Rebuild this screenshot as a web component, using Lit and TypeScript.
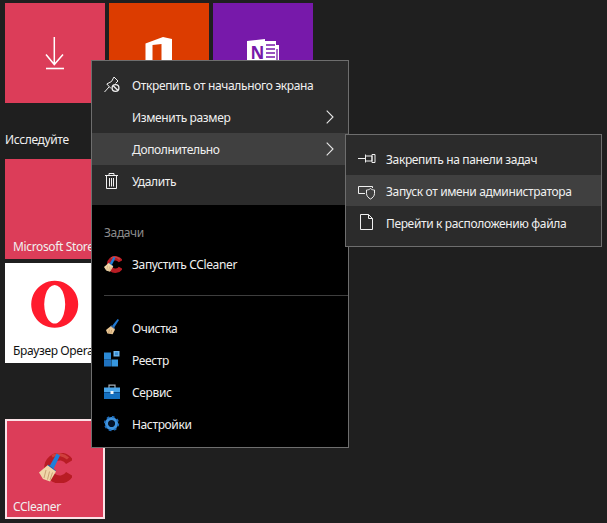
import { LitElement, html, css, svg } from "lit";
import { customElement } from "lit/decorators.js";

const ccleaner = (w: number, h: number) => html`<svg width=${w} height=${h} viewBox="0 0 33 30">
  <path d="M30.5 9 A11.5 11.5 0 1 0 30.5 21" fill="none" stroke="#b81c24" stroke-width="8"/>
  <path d="M29 5.5 A13.5 13.5 0 0 0 13 3.2" fill="none" stroke="#cf3f3c" stroke-width="3"/>
  <path d="M17.6 0.6 L21 2.6 L14.5 16 L10.4 13.4 Z" fill="#1f7fd8"/>
  <path d="M9.5 11.5 L16.8 17.5 L15.6 19.5 L8 13 Z" fill="#2461a8"/>
  <path d="M0 19.5 L8.6 12.3 L17 18.5 L11 28.5 L4 26 Z" fill="#f0d6a8"/>
  <path d="M7 17 L5 25 M10.5 18.5 L8.5 26.5 M13.5 19.5 L11 27" stroke="#c9a274" stroke-width="1" fill="none"/>
</svg>`;

const brush = html`<svg width="18" height="18" viewBox="0 0 18 18">
  <path d="M13.6 0 L15 1 L10.2 8.4 L8 7 Z" fill="#1f78d1"/>
  <path d="M7.2 6.2 L11 9 L10.2 10.4 L6.4 7.6 Z" fill="#3a6ea8"/>
  <path d="M2 11 L6.6 7.2 L11 10.6 L8.6 15.2 L3.4 14.6 Z" fill="#eac795"/>
  <path d="M5.5 10.5 L4.6 14 M7.6 11 L6.8 14.6" stroke="#b98f5c" stroke-width=".7"/>
</svg>`;

const registry = html`<svg width="18" height="18" viewBox="0 0 18 18">
  <rect x="0" y="1.5" width="7" height="7" fill="#2b8ad6"/>
  <rect x="0" y="8.5" width="7" height="7" fill="#1f72bf"/>
  <rect x="7.4" y="8.5" width="6.6" height="7" fill="#3798e0"/>
  <rect x="9.5" y="0" width="6" height="5.5" fill="#6db6ec"/>
  <rect x="11" y="1.3" width="3" height="2.8" fill="#3a8fd6"/>
</svg>`;

const toolbox = html`<svg width="16" height="16" viewBox="0 0 16 16">
  <path d="M5 4 V1.2 H11 V4" stroke="#a3aeb8" stroke-width="1.2" fill="none"/>
  <rect x="0" y="3.5" width="16" height="5" fill="#4aa6ea"/>
  <rect x="0" y="8.5" width="16" height="6.5" fill="#1470c0"/>
  <rect x="0" y="8" width="16" height="1" fill="#0d4f90"/>
  <rect x="6.5" y="7" width="3" height="3" fill="#f2f6fa"/>
</svg>`;

const gear = html`<svg width="16" height="16" viewBox="0 0 18 18">
  <circle cx="8.5" cy="8.5" r="5.6" fill="none" stroke="#3f93de" stroke-width="3.6"/>
  <circle cx="8.5" cy="8.5" r="7.6" fill="none" stroke="#1f6dbb" stroke-width="2" stroke-dasharray="3 3"/>
  <circle cx="8.5" cy="8.5" r="3.5" fill="#03122a"/>
</svg>`;

const stroke = "#f0f0f0";
const unpin = html`<svg width="18" height="18" viewBox="0 0 18 18" fill="none" stroke=${stroke} stroke-width="1">
  <path d="M0.5 16 L5 11 M2.8 8 L7.5 5.5 L10 1 L14 5 L11.5 7.5 M2.8 8 L7 12.5"/>
  <circle cx="11.5" cy="12" r="3.4" stroke-width="1.3"/>
  <path d="M9.2 9.7 L13.8 14.3" stroke-width="1.3"/>
</svg>`;
const trash = html`<svg width="18" height="18" viewBox="0 0 18 18" fill="none" stroke=${stroke} stroke-width="1">
  <path d="M1 3.5 H14 M5 3.5 V1.5 H10 V3.5 M2.5 3.5 V16.5 H12.5 V3.5 M5.5 6 V14.5 M7.5 6 V14.5 M9.5 6 V14.5"/>
</svg>`;
const chevron = html`<svg class="chev" width="8" height="14" viewBox="0 0 8 14" fill="none" stroke="#e6e6e6" stroke-width="1.1">
  <path d="M0.7 0.7 L7 7 L0.7 13.3"/>
</svg>`;
const hpin = html`<svg width="18" height="18" viewBox="0 0 18 18" fill="none" stroke=${stroke} stroke-width="1">
  <path d="M0 8.5 H7 M7.5 4.5 V12.5 M7.5 6 H14 V11 H7.5 M14 4.5 H17 V12.5 H14 Z"/>
</svg>`;
const shield = html`<svg width="18" height="18" viewBox="0 0 18 18" fill="none" stroke=${stroke} stroke-width="1">
  <path d="M7 11.5 H0.5 V4.5 H14.5 V6"/>
  <path d="M12.5 6.5 C11.5 7.5 10 8 8.5 8 V11.5 C8.5 14 10.5 16 12.5 17 C14.5 16 16.5 14 16.5 11.5 V8 C15 8 13.5 7.5 12.5 6.5 Z"/>
</svg>`;
const file = html`<svg width="18" height="18" viewBox="0 0 18 18" fill="none" stroke=${stroke} stroke-width="1">
  <path d="M2.5 1.5 V16.5 H14.5 V5.5 L10.5 1.5 Z M10.5 1.5 V5.5 H14.5"/>
</svg>`;

const office = svg`<path d="M145.5 43.5 L163 37 L172 39 V75 H145.5 Z M152.5 45 V70 H161.5 V44 Z" fill="#fff" fill-rule="evenodd" transform="translate(-109 -3)"/>`;

@customElement("app-root")
export class AppRoot extends LitElement {
  static styles = css`
    :host {
      display: block;
      position: relative;
      width: 607px;
      height: 523px;
      overflow: hidden;
      background: #1f1f1f;
      font-family: "Noto Sans", "Open Sans", sans-serif;
      font-size: 12px;
      letter-spacing: -0.36px;
      color: #f0f0f0;
    }
    .tiles { display: flex; flex-direction: column; padding: 3px 0 0 5px; }
    .row { display: flex; gap: 4px; }
    .tile {
      position: relative;
      box-sizing: border-box;
      width: 100px;
      height: 100px;
      display: flex;
      align-items: center;
      justify-content: center;
    }
    .tile > svg { display: block; }
    .pink { background: #dc3d59; }
    .orange { background: #dc3c00; }
    .purple { background: #7719aa; }
    .white { background: #fff; color: #111; }
    .sel { border: 2px solid #fbe2e6; }
    .sel > svg { margin: 0 0 3px 1px; }
    .stack { display: flex; flex-direction: column; gap: 4px; }
    .caption { position: absolute; left: 8px; bottom: 4px; line-height: 16px; white-space: nowrap; }
    .sel .caption { left: 6px; bottom: 2px; }
    .section { height: 56px; box-sizing: border-box; padding-top: 16px; display: flex; align-items: center; color: #f0f0f0; white-space: nowrap; }
    .gap { height: 56px; }
    .menu {
      position: absolute;
      box-sizing: border-box;
      background: #000;
      border: 1px solid #6e6e6e;
      display: flex;
      flex-direction: column;
    }
    .main { left: 91px; top: 60px; width: 258px; height: 388px; }
    .sub { left: 345px; top: 134px; width: 257px; height: 113px; background: #2b2b2b; padding: 8px 0; }
    .top { background: #2b2b2b; padding: 8px 0; }
    .item { display: flex; align-items: center; height: 32px; padding: 0 0 0 12px; }
    .item.hot { background: #404040; }
    .ic { width: 28px; flex: none; display: flex; align-items: center; }
    .ic svg { display: block; }
    .txt { flex: 1; white-space: nowrap; }
    .sub .txt { padding-top: 2px; }
    .chev { margin-right: 14px; }
    .bottom { padding: 11px 0 0; display: flex; flex-direction: column; }
    .head { height: 32px; display: flex; align-items: center; padding-left: 12px; color: #8c8c8c; }
    .sep { height: 1px; background: #3e3e3e; margin: 15px 0 16px 12px; }
  `;

  render() {
    return html`
      <div class="tiles">
        <div class="row">
          <div class="tile pink">
            <svg width="100" height="100" viewBox="0 0 100 100" fill="none" stroke="#fff">
              <path d="M49.3 34 V62 M41 51.5 L49.3 61.5 L58 51.5" stroke-width="1.5"/>
              <path d="M41 65.5 H59" stroke-width="1.6"/>
            </svg>
          </div>
          <div class="tile orange">
            <svg width="100" height="100" viewBox="0 0 100 100">${office}</svg>
          </div>
          <div class="tile purple">
            <svg width="100" height="100" viewBox="0 0 100 100">
              <path d="M34 38 L52 36 V70 H34 Z" fill="#fff"/>
              <path d="M52 38 H63 V42 H66 V70 H52 Z" fill="#fff"/>
              <path d="M53 42 H62 M53 46 H62 M53 50 H62 M53 54 H62 M53 58 H62 M64 46 V62" stroke="#7719aa" stroke-width="1.3"/>
              <text x="37.5" y="56" font-family="Noto Sans" font-weight="700" font-size="17" fill="#7719aa">N</text>
            </svg>
          </div>
        </div>
        <div class="section">Исследуйте</div>
        <div class="stack">
          <div class="tile pink"><span class="caption">Microsoft Store</span></div>
          <div class="tile white">
            <svg width="100" height="100" viewBox="0 0 100 100">
              <path fill-rule="evenodd" fill="#ff1b2d" d="M49.7 17.8 a23.5 23.5 0 1 0 0.01 0 Z M49.7 22 a10.5 19.3 0 1 1 -0.01 0 Z"/>
            </svg>
            <span class="caption">Браузер Opera</span>
          </div>
        </div>
        <div class="gap"></div>
        <div class="tile pink sel">
          ${ccleaner(33, 30)}
          <span class="caption">CCleaner</span>
        </div>
      </div>

      <div class="menu main">
        <div class="top">
          <div class="item"><span class="ic">${unpin}</span><span class="txt">Открепить от начального экрана</span></div>
          <div class="item"><span class="ic"></span><span class="txt">Изменить размер</span>${chevron}</div>
          <div class="item hot"><span class="ic"></span><span class="txt">Дополнительно</span>${chevron}</div>
          <div class="item"><span class="ic">${trash}</span><span class="txt">Удалить</span></div>
        </div>
        <div class="bottom">
          <div class="head">Задачи</div>
          <div class="item"><span class="ic">${ccleaner(18, 17)}</span><span class="txt">Запустить CCleaner</span></div>
          <div class="sep"></div>
          <div class="item"><span class="ic">${brush}</span><span class="txt">Очистка</span></div>
          <div class="item"><span class="ic">${registry}</span><span class="txt">Реестр</span></div>
          <div class="item"><span class="ic">${toolbox}</span><span class="txt">Сервис</span></div>
          <div class="item"><span class="ic">${gear}</span><span class="txt">Настройки</span></div>
        </div>
      </div>

      <div class="menu sub">
        <div class="item"><span class="ic">${hpin}</span><span class="txt">Закрепить на панели задач</span></div>
        <div class="item hot"><span class="ic">${shield}</span><span class="txt">Запуск от имени администратора</span></div>
        <div class="item"><span class="ic">${file}</span><span class="txt">Перейти к расположению файла</span></div>
      </div>
    `;
  }
}
